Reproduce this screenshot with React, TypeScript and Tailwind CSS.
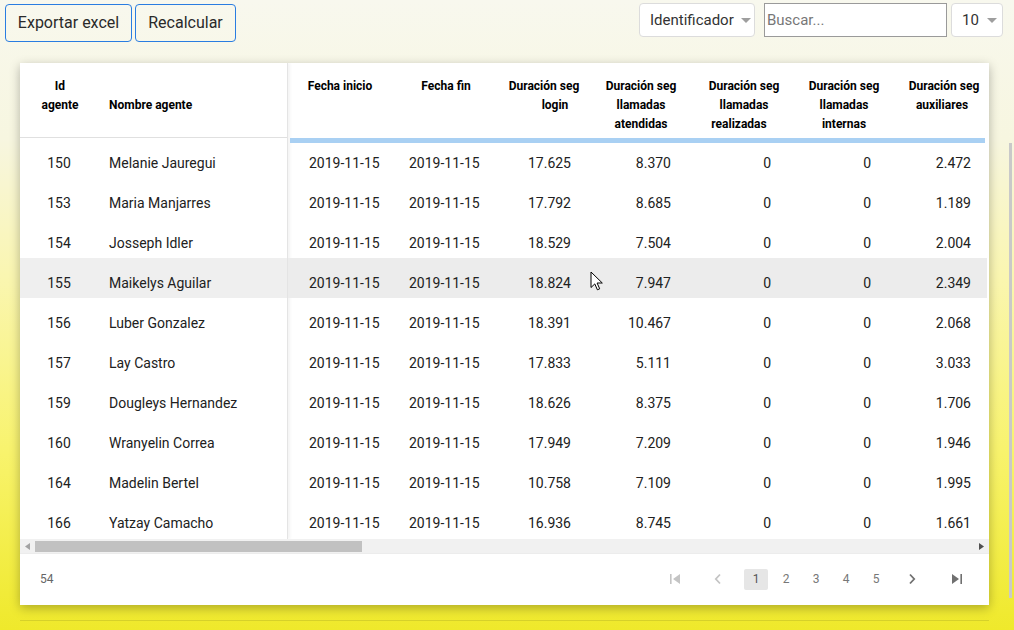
import React from "react";

type Row = {
  id: number;
  name: string;
  login: string;
  atendidas: string;
  realizadas: string;
  internas: string;
  auxiliares: string;
};

const rows: Row[] = [
  { id: 150, name: "Melanie Jauregui", login: "17.625", atendidas: "8.370", realizadas: "0", internas: "0", auxiliares: "2.472" },
  { id: 153, name: "Maria Manjarres", login: "17.792", atendidas: "8.685", realizadas: "0", internas: "0", auxiliares: "1.189" },
  { id: 154, name: "Josseph Idler", login: "18.529", atendidas: "7.504", realizadas: "0", internas: "0", auxiliares: "2.004" },
  { id: 155, name: "Maikelys Aguilar", login: "18.824", atendidas: "7.947", realizadas: "0", internas: "0", auxiliares: "2.349" },
  { id: 156, name: "Luber Gonzalez", login: "18.391", atendidas: "10.467", realizadas: "0", internas: "0", auxiliares: "2.068" },
  { id: 157, name: "Lay Castro", login: "17.833", atendidas: "5.111", realizadas: "0", internas: "0", auxiliares: "3.033" },
  { id: 159, name: "Dougleys Hernandez", login: "18.626", atendidas: "8.375", realizadas: "0", internas: "0", auxiliares: "1.706" },
  { id: 160, name: "Wranyelin Correa", login: "17.949", atendidas: "7.209", realizadas: "0", internas: "0", auxiliares: "1.946" },
  { id: 164, name: "Madelin Bertel", login: "10.758", atendidas: "7.109", realizadas: "0", internas: "0", auxiliares: "1.995" },
  { id: 166, name: "Yatzay Camacho", login: "16.936", atendidas: "8.745", realizadas: "0", internas: "0", auxiliares: "1.661" },
];

const HOVER_ROW = 3;

function Caret() {
  return (
    <svg width="10" height="5" viewBox="0 0 10 5" className="shrink-0">
      <path d="M0 0h10L5 5z" fill="#9e9e9e" />
    </svg>
  );
}

function FirstPage({ color }: { color: string }) {
  return (
    <svg width="12" height="12" viewBox="0 0 12 12">
      <rect x="1" y="1" width="1.6" height="10" fill={color} />
      <path d="M11 1v10L4 6z" fill={color} />
    </svg>
  );
}

function LastPage({ color }: { color: string }) {
  return (
    <svg width="12" height="12" viewBox="0 0 12 12">
      <path d="M1 1v10l7-5z" fill={color} />
      <rect x="9.4" y="1" width="1.6" height="10" fill={color} />
    </svg>
  );
}

function Chevron({ dir, color }: { dir: "l" | "r"; color: string }) {
  return (
    <svg width="10" height="12" viewBox="0 0 10 12">
      <path
        d={dir === "l" ? "M7 1.5 2.8 6 7 10.5" : "M3 1.5 7.2 6 3 10.5"}
        fill="none"
        stroke={color}
        strokeWidth="1.8"
      />
    </svg>
  );
}

// header cell classes keep the slight off-centre look of the original grid
const numCols: { key: keyof Row; lines: string[]; head: string; last?: string }[] = [
  { key: "login", lines: ["Duración seg", "login"], head: "pl-[8px]", last: "pl-[22px]" },
  { key: "atendidas", lines: ["Duración seg", "llamadas", "atendidas"], head: "pl-[2px]" },
  { key: "realizadas", lines: ["Duración seg", "llamadas", "realizadas"], head: "pl-[8px]", last: "pr-[10px]" },
  { key: "internas", lines: ["Duración seg", "llamadas", "internas"], head: "pl-[8px]" },
  { key: "auxiliares", lines: ["Duración seg", "auxiliares"], head: "pl-[8px]", last: "pr-[4px]" },
];

export default function App() {
  return (
    <div
      className="relative w-[1014px] h-[630px] overflow-hidden bg-[linear-gradient(to_bottom,#f8f8ee_0%,#f7f6e0_22%,#faf6b0_44%,#f8f36c_72%,#efe92b_100%)] text-[#212121]"
      style={{ fontFamily: "Roboto, 'Liberation Sans', sans-serif" }}
    >
      {/* Toolbar */}
      <div className="flex items-start justify-between pl-[5px] pr-[11px] pt-[3px]">
        <div className="flex gap-[3px] mt-[1px]">
          <button className="h-[38px] w-[127px] rounded-[4px] border border-[#2a7de1] text-[16px] text-[#2a2a2a]">
            Exportar excel
          </button>
          <button className="h-[38px] w-[101px] rounded-[4px] border border-[#2a7de1] text-[16px] text-[#2a2a2a]">
            Recalcular
          </button>
        </div>
        <div className="flex items-center">
          <div className="flex h-[34px] w-[116px] items-center gap-[7px] rounded-[4px] border border-[#dcdcdc] bg-white pl-[10px]">
            <span className="text-[15px] text-[#333]">Identificador</span>
            <Caret />
          </div>
          <div className="ml-[9px] flex h-[34px] w-[183px] items-center border border-[#9a9a9a] bg-white pl-[2px]">
            <span className="text-[15px] text-[#777]">Buscar...</span>
          </div>
          <div className="ml-[4px] flex h-[34px] w-[52px] items-center gap-[8px] rounded-[4px] border border-[#dcdcdc] bg-white pl-[10px]">
            <span className="text-[15px] text-[#333]">10</span>
            <Caret />
          </div>
        </div>
      </div>

      {/* Card */}
      <div className="ml-[20px] mt-[21px] w-[969px] bg-white shadow-[0_3px_10px_rgba(0,0,0,0.28)]">
        <div className="flex h-[476px] overflow-hidden">
          {/* fixed columns */}
          <div className="w-[268px] shrink-0 border-r border-[#e4e4e4] shadow-[2px_0_3px_rgba(0,0,0,0.05)]">
            <div className="flex h-[75px] items-end border-b border-[#e0e0e0] pb-[22px] text-[12px] font-bold leading-[19px] text-black">
              <div className="w-[80px] text-center">
                Id
                <br />
                agente
              </div>
              <div className="pl-[9px]">Nombre agente</div>
            </div>
            {rows.map((r, i) => (
              <div
                key={r.id}
                className={`flex h-[40px] items-start pt-[15px] text-[14px] leading-[20px] ${i === HOVER_ROW ? "bg-[#efefef]" : ""}`}
              >
                <div className="w-[78px] text-center">{r.id}</div>
                <div className="pl-[11px]">{r.name}</div>
              </div>
            ))}
          </div>

          {/* scrolling columns */}
          <div className="relative min-w-0 flex-1 overflow-hidden">
            <div className="flex h-[75px] items-start pl-[2px] pt-[14px] text-[12px] font-bold leading-[19px] text-black">
              <div className="w-[100px] shrink-0 text-center">Fecha inicio</div>
              <div className="w-[100px] shrink-0 pl-[12px] text-center">Fecha fin</div>
              {numCols.map((c) => (
                <div key={c.key} className={`w-[100px] shrink-0 text-center ${c.head}`}>
                  {c.lines.map((l, j) => (
                    <div key={j} className={j === c.lines.length - 1 && c.last ? c.last : ""}>
                      {l}
                    </div>
                  ))}
                </div>
              ))}
            </div>
            {rows.map((r, i) => (
              <div
                key={r.id}
                className={`mr-[2px] flex h-[40px] items-start pl-[2px] pt-[15px] text-[14px] leading-[20px] ${i === HOVER_ROW ? "bg-[#ececec]" : ""}`}
              >
                <div className="w-[100px] shrink-0 pl-[19px]">2019-11-15</div>
                <div className="w-[100px] shrink-0 pl-[19px]">2019-11-15</div>
                {numCols.map((c) => (
                  <div key={c.key} className="w-[100px] shrink-0 pr-[19px] text-right">
                    {r[c.key]}
                  </div>
                ))}
              </div>
            ))}
            {/* loading bar over the first row */}
            <div className="absolute left-[2px] top-[75px] h-[5px] w-[695px] bg-[#a9d0f3]" />
          </div>
        </div>

        {/* horizontal scrollbar */}
        <div className="flex h-[15px] items-center border-b border-[#ececec] bg-[#f1f1f1] px-[5px]">
          <svg width="5" height="7" viewBox="0 0 5 7">
            <path d="M5 0v7L0 3.5z" fill="#a3a3a3" />
          </svg>
          <div className="ml-[5px] h-[11px] w-[327px] bg-[#c1c1c1]" />
          <div className="flex-1" />
          <svg width="5" height="7" viewBox="0 0 5 7">
            <path d="M0 0v7l5-3.5z" fill="#505050" />
          </svg>
        </div>

        {/* footer */}
        <div className="flex h-[51px] items-center pb-[1px] text-[12px]">
          <span className="pl-[20px] text-[#666]">54</span>
          <div className="flex-1" />
          <div className="flex items-center pr-[20px]">
            <div className="flex w-[24px] justify-center">
              <FirstPage color="#c4c4c4" />
            </div>
            <div className="ml-[19px] flex w-[24px] justify-center">
              <Chevron dir="l" color="#c4c4c4" />
            </div>
            <div className="ml-[14px] flex h-[21px] w-[24px] items-center justify-center rounded-[2px] bg-[#e6e6e6] text-[#555]">
              1
            </div>
            {[2, 3, 4, 5].map((p) => (
              <div key={p} className="ml-[6px] flex w-[24px] justify-center text-[#777]">
                {p}
              </div>
            ))}
            <div className="ml-[12px] flex w-[24px] justify-center">
              <Chevron dir="r" color="#707070" />
            </div>
            <div className="ml-[21px] flex w-[24px] justify-center">
              <LastPage color="#707070" />
            </div>
          </div>
        </div>
      </div>

      <div className="ml-[20px] mt-[15px] h-px w-[969px] bg-[#d6d12a]" />

      {/* page scrollbar */}
      <div className="absolute right-[2px] top-[143px] h-[455px] w-[3px] bg-[#c9c9c9]" />

      {/* mouse cursor */}
      <svg className="absolute left-[590px] top-[271px]" width="13" height="20" viewBox="0 0 13 20">
        <path
          d="M1 1v15.5l3.8-3.6 2.6 5.9 2.3-1-2.6-5.8H12.3z"
          fill="white"
          stroke="black"
          strokeWidth="1"
          strokeLinejoin="round"
        />
      </svg>
    </div>
  );
}
